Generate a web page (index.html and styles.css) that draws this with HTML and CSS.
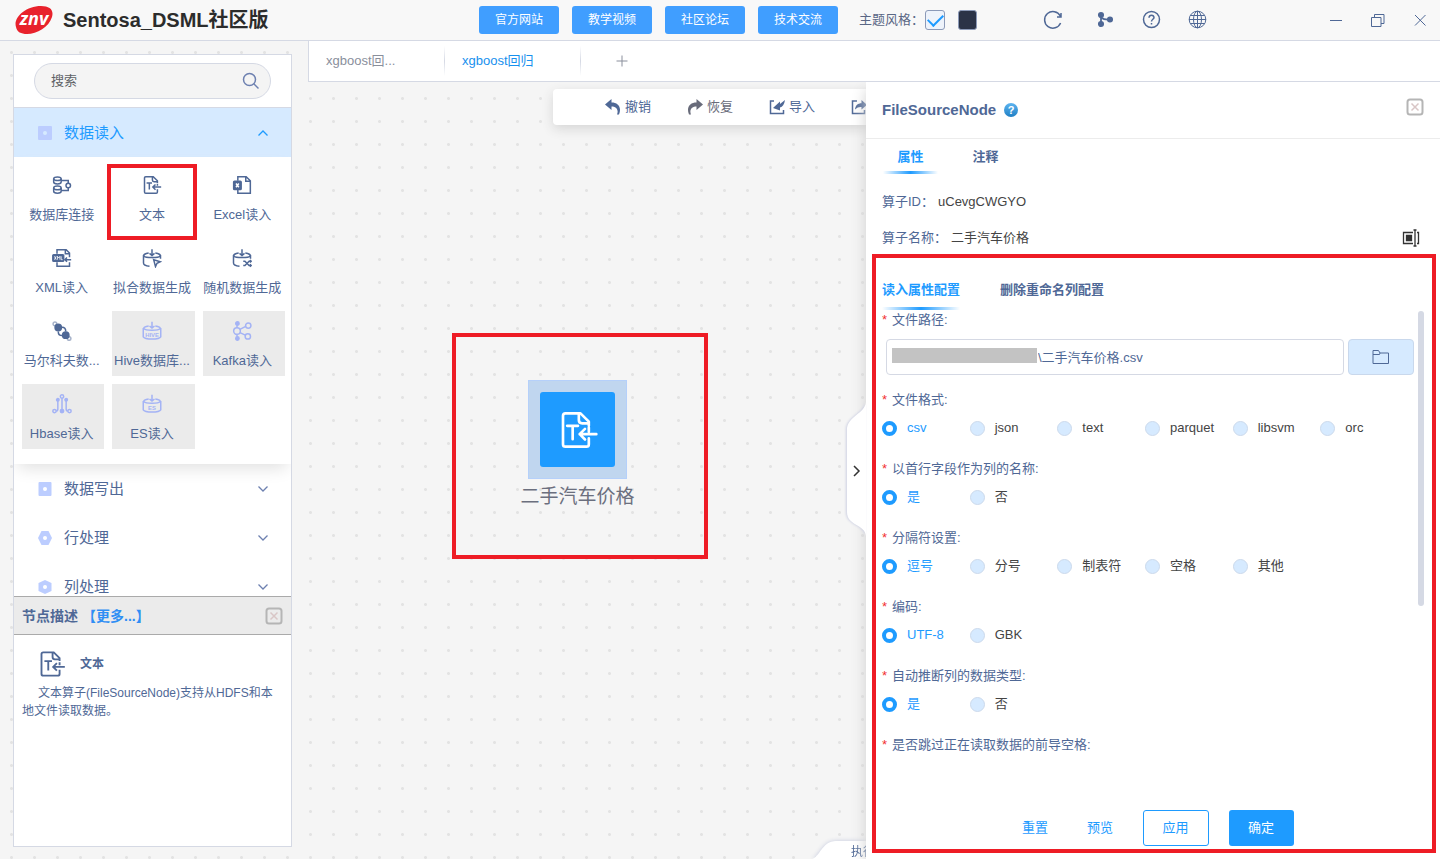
FILE: index.html
```html
<!DOCTYPE html>
<html lang="zh-CN">
<head>
<meta charset="utf-8">
<title>Sentosa_DSML社区版</title>
<link rel="stylesheet" href="styles.css">
</head>
<body>
<svg class="defs" width="0" height="0" aria-hidden="true">
  <symbol id="i-text" viewBox="0 0 24 24"><path d="M18.500 13v-2.500M18.500 9.500V7l-5-5H4.500Q3 2 3 3.500v17Q3 22 4.500 22h12.500q1.500 0 1.500-1.500V17M12.500 2v4q0 2 2 2h4M5.500 9.500h6.500M8.800 9.500v8M23 14.500H13M16.200 11.300L13 14.500l3.200 3.200"/></symbol>
  <symbol id="i-db" viewBox="0 0 24 24"><ellipse cx="6.500" cy="4.500" rx="4.500" ry="2.200"/><path d="M2 4.500v4c0 3 9 3 9 0v-4"/><ellipse cx="6.500" cy="15.500" rx="4.500" ry="2.200"/><path d="M2 15.500v4c0 3 9 3 9 0v-4M11 6.500h8.500V10M11 18.500h8.500V15"/><circle cx="19.500" cy="12.500" r="2.700"/></symbol>
  <symbol id="i-excel" viewBox="0 0 24 24"><path d="M7 7V2h10l5 5v15H7v-4M16.500 2v5.500H22"/><rect x="2" y="7.500" width="9" height="10" rx="1" fill="currentColor"/><path d="M4.800 10.300l3.400 4.400M8.200 10.300l-3.400 4.400" stroke="#fff"/></symbol>
  <symbol id="i-xml" viewBox="0 0 24 24"><path d="M6 7V2h11l4 4v5M16 2v5h5M6 17v5h15v-5M23 14h-7.500M18 11.500L15.500 14l2.500 2.500"/><rect x="1" y="8" width="13" height="8" rx="1" fill="currentColor"/><path d="M3 10l2 4M5 10l-2 4M6.500 14v-4l1.500 2 1.500-2v4M11 10v4h1.800" stroke="#fff" stroke-width="1"/></symbol>
  <symbol id="i-fit" viewBox="0 0 24 24"><path d="M12 1.500V9M9 6.500L12 9l3-2.500M8 6C-1 7.500.5 11.500 12 11.500S25 7.500 16 6M1.800 8.500V18c0 2 3 3.500 7.200 4M22.200 8.500V13M14 14l8 2.500-4 1.800-1.800 4z"/></symbol>
  <symbol id="i-rand" viewBox="0 0 24 24"><path d="M12 1.500V9M9 6.500L12 9l3-2.500M8 6C-1 7.500.5 11.500 12 11.500S25 7.500 16 6M1.800 8.500V18c0 2 3 3.500 7.200 4M22.200 8.500V13M13.500 16h2l5 5h2.500M13.500 21h2l5-5h2.500M21.500 14.500L23 16l-1.500 1.500M21.500 19.500L23 21l-1.500 1.500"/></symbol>
  <symbol id="i-markov" viewBox="0 0 24 24"><circle cx="3.500" cy="3.500" r="2.200" opacity=".5"/><circle cx="20.500" cy="21" r="2.200" opacity=".5"/><circle cx="7.500" cy="7.800" r="3.800" fill="currentColor"/><circle cx="16.500" cy="17" r="3.800" fill="currentColor"/><path d="M12 7.500c3 0 4.500 2 4.500 5M12 17.500c-3 0-4.500-2-4.500-5"/></symbol>
  <symbol id="i-kafka" viewBox="0 0 24 24"><circle cx="6" cy="12" r="4"/><circle cx="6.500" cy="3" r="2" fill="currentColor"/><circle cx="6.500" cy="21" r="2" fill="currentColor"/><circle cx="19.500" cy="5.500" r="3.200"/><circle cx="19" cy="18.500" r="3.200"/><path d="M6 5v3M6 16v3M9.500 10l7-3.500M9.500 14l6.500 3"/></symbol>
  <symbol id="i-hbase" viewBox="0 0 24 24"><circle cx="12" cy="3" r="2"/><circle cx="7" cy="7" r="1.500" fill="currentColor"/><circle cx="17" cy="7" r="1.500" fill="currentColor"/><circle cx="3" cy="20.500" r="2"/><circle cx="12" cy="20.500" r="2" fill="currentColor"/><circle cx="21" cy="20.500" r="2"/><path d="M12 5v15M7 7v11q0 2.500-2 2.500M17 7v11q0 2.500 2 2.500"/></symbol>
  <symbol id="i-drum" viewBox="0 0 24 24"><path d="M12 1v7.500M9 6l3 2.500L15 6M8 6C-1 7.500.5 11 12 11s13-3.500 4-5M1.500 8.500V19c2 3.500 19 3.500 21 0V8.500"/></symbol>
  <symbol id="i-down" viewBox="0 0 12 12"><path d="M1.500 3.500L6 8l4.500-4.500"/></symbol>
  <symbol id="i-close-box" viewBox="0 0 18 18"><rect x="1.500" y="1.500" width="15" height="15" rx="2.500" stroke="#b5b5b5" stroke-width="2"/><path d="M5.500 5.500l7 7M12.500 5.500l-7 7" stroke="#d9c6c6" stroke-width="1.500"/></symbol>
</svg>

<header class="topbar">
  <div class="brand">
    <svg class="logo" viewBox="0 0 38 28" role="img" aria-label="znv"><path d="M1 21C-2 12 10 0 26 0c9 0 13 4 11 11C34 21 22 28 12 28 6 28 2 26 1 21z" fill="#e8222c"/><text x="19" y="19" class="logo-text">znv</text></svg>
    <h1 class="brand-name">Sentosa_DSML社区版</h1>
  </div>
  <nav class="links">
    <button class="link-btn">官方网站</button>
    <button class="link-btn">教学视频</button>
    <button class="link-btn">社区论坛</button>
    <button class="link-btn">技术交流</button>
  </nav>
  <div class="theme">
    <label for="theme-light">主题风格：</label>
    <input class="theme-box" type="checkbox" id="theme-light" checked>
    <button class="theme-dark" aria-label="深色"></button>
  </div>
  <div class="tools">
    <button class="icon-btn" aria-label="刷新"><svg class="ico" viewBox="0 0 20 20"><path d="M17.300 6A8.300 8.300 0 1 0 17.600 13M18 3v4h-4"/></svg></button>
    <button class="icon-btn" aria-label="分支"><svg class="ico" viewBox="0 0 20 20"><g fill="currentColor"><circle cx="6" cy="5" r="2.300"/><circle cx="6" cy="14" r="2.300"/><circle cx="15" cy="9.500" r="2.300"/></g><path d="M6 5v9M6 7.500q3 2.500 9 2" stroke-width="1.800"/></svg></button>
    <button class="icon-btn" aria-label="帮助"><svg class="ico" viewBox="0 0 20 20"><circle cx="10.500" cy="9.500" r="8"/><path d="M8 7.800q.2-2.600 2.500-2.600T13 7.500c0 1.700-2.500 1.900-2.500 4M10.500 13v1.500"/></svg></button>
    <button class="icon-btn" aria-label="语言"><svg class="ico thin" viewBox="0 0 20 20"><circle cx="10.500" cy="9.500" r="8.300"/><ellipse cx="10.500" cy="9.500" rx="4" ry="8.300"/><path d="M10.500 1v17M2 9.500h17M3.500 5.500h14M3.500 13.500h14"/></svg></button>
  </div>
  <div class="win">
    <button class="icon-btn" aria-label="最小化"><svg class="ico thin" viewBox="0 0 20 20"><path d="M4 10.500h12"/></svg></button>
    <button class="icon-btn" aria-label="还原"><svg class="ico thin" viewBox="0 0 20 20"><path d="M3.500 7.500h9.500v9H3.500zM6.500 7.500v-3H16v9h-3"/></svg></button>
    <button class="icon-btn" aria-label="关闭"><svg class="ico thin" viewBox="0 0 20 20"><path d="M5 15.500L15.500 5M5 5l10.500 10.500"/></svg></button>
  </div>
</header>

<div class="page">
  <aside class="sidebar">
    <div class="search">
      <input class="search-input" type="text" placeholder="搜索" aria-label="搜索">
      <svg class="search-icon" viewBox="0 0 18 18"><circle cx="7.500" cy="7.500" r="6"/><path d="M12 12l4.500 4.500"/></svg>
    </div>
    <div class="categories">
      <button class="category open"><svg class="cat-icon" viewBox="0 0 14 14"><rect width="14" height="14" rx="1" fill="#bccdff"/><circle cx="7" cy="7" r="2" fill="#d6eaff"/></svg><span>数据读入</span><svg class="chevron up"><use href="#i-down"/></svg></button>
      <div class="ops">
        <button class="op"><svg class="op-icon"><use href="#i-db"/></svg><span>数据库连接</span></button>
        <button class="op marked"><svg class="op-icon"><use href="#i-text"/></svg><span>文本</span></button>
        <button class="op"><svg class="op-icon"><use href="#i-excel"/></svg><span>Excel读入</span></button>
        <button class="op"><svg class="op-icon"><use href="#i-xml"/></svg><span>XML读入</span></button>
        <button class="op"><svg class="op-icon"><use href="#i-fit"/></svg><span>拟合数据生成</span></button>
        <button class="op"><svg class="op-icon"><use href="#i-rand"/></svg><span>随机数据生成</span></button>
        <button class="op"><svg class="op-icon"><use href="#i-markov"/></svg><span>马尔科夫数...</span></button>
        <button class="op off"><svg class="op-icon" viewBox="0 0 24 24"><use href="#i-drum"/><text x="12" y="19.500" class="glyph-text">HIVE</text></svg><span>Hive数据库...</span></button>
        <button class="op off"><svg class="op-icon"><use href="#i-kafka"/></svg><span>Kafka读入</span></button>
        <button class="op off"><svg class="op-icon"><use href="#i-hbase"/></svg><span>Hbase读入</span></button>
        <button class="op off"><svg class="op-icon" viewBox="0 0 24 24"><use href="#i-drum"/><text x="12" y="19.500" class="glyph-text">ES</text></svg><span>ES读入</span></button>
      </div>
      <button class="category"><svg class="cat-icon" viewBox="0 0 14 14"><rect x=".5" width="13" height="14" rx="1" fill="#bccdff"/><circle cx="7" cy="7" r="2" fill="#fff"/></svg><span>数据写出</span><svg class="chevron"><use href="#i-down"/></svg></button>
      <button class="category"><svg class="cat-icon" viewBox="0 0 14 14"><path d="M3.500 0h7L14 7l-3.500 7h-7L0 7z" fill="#bccdff"/><circle cx="7" cy="7" r="2" fill="#fff"/></svg><span>行处理</span><svg class="chevron"><use href="#i-down"/></svg></button>
      <button class="category"><svg class="cat-icon" viewBox="0 0 14 14"><path d="M7 0l6.500 3v8L7 14 .5 11V3z" fill="#bccdff"/><circle cx="7" cy="7" r="2" fill="#fff"/></svg><span>列处理</span><svg class="chevron"><use href="#i-down"/></svg></button>
    </div>
    <section class="desc">
      <div class="desc-head">
        <h2>节点描述</h2><a href="#more">【更多...】</a>
        <button class="close-btn" aria-label="关闭"><svg class="close-icon"><use href="#i-close-box"/></svg></button>
      </div>
      <div class="desc-body">
        <h3><svg class="desc-icon"><use href="#i-text"/></svg>文本</h3>
        <p>文本算子(FileSourceNode)支持从HDFS和本地文件读取数据。</p>
      </div>
    </section>
  </aside>

  <main class="main">
    <div class="tabs">
      <button class="tab">xgboost回...</button>
      <button class="tab active">xgboost回归</button>
      <button class="tab-add" aria-label="新建"><svg class="plus" viewBox="0 0 12 12"><path d="M6 .5v11M.5 6h11"/></svg></button>
    </div>
    <div class="workspace">
      <div class="canvas">
        <div class="toolbar">
          <button><svg class="bar-icon solid" viewBox="0 0 16 16"><path d="M0 5.500L6.500 0v3.500C13 3.500 17 8 14 15.500h-2c2-5-1-8-5.500-8V11z"/></svg>撤销</button>
          <button class="grey"><svg class="bar-icon solid" viewBox="0 0 16 16"><path d="M16 5.500L9.500 0v3.500C3 3.500-1 8 2 15.500h2c-2-5 1-8 5.500-8V11z"/></svg>恢复</button>
          <button><svg class="bar-icon" viewBox="0 0 16 16"><path d="M5 2H1.500v12.500h13V11"/><path d="M16 1l-5 4V2.500L4 9l7 2.500V8.500c2.500-.6 4.300-3 5-7.500z" fill="currentColor" stroke="none"/></svg>导入</button>
          <button aria-label="导出"><svg class="bar-icon" viewBox="0 0 16 16"><path d="M6 2H1.500v12.500h12V11"/><path d="M4 10.500C4.500 6 7 4.300 10.500 4.200V1L16 6l-5.500 4.500V8C8 7.800 6 8.500 4 10.500z" fill="currentColor" stroke="none"/></svg></button>
        </div>
        <div class="node-frame">
          <div class="node">
            <div class="node-select"><div class="node-box"><svg class="node-icon"><use href="#i-text"/></svg></div></div>
            <span class="node-name">二手汽车价格</span>
          </div>
        </div>
        <div class="run-tab"><svg class="run-shape" viewBox="0 0 60 18"><path d="M0 18C8 16 10 0 24 0h36v18z"/></svg><span>执行</span></div>
      </div>

      <section class="drawer">
        <button class="handle" aria-label="收起"><svg class="handle-svg" viewBox="0 0 20 136"><path class="handle-shape" d="M20 0C19 12 1 14 1 28v82c0 14 18 12 19 24z"/><path class="handle-arrow" d="M8 64l5 5-5 5"/></svg></button>
        <div class="drawer-head">
          <h2>FileSourceNode</h2>
          <svg class="help" viewBox="0 0 14 14"><defs><linearGradient id="hg" x2="0" y2="1"><stop stop-color="#5db4f0"/><stop offset="1" stop-color="#1f7fc4"/></linearGradient></defs><circle cx="7" cy="7" r="7" fill="url(#hg)"/><text x="7" y="11" class="help-text">?</text></svg>
          <button class="close-btn" aria-label="关闭"><svg class="close-icon"><use href="#i-close-box"/></svg></button>
        </div>
        <div class="drawer-tabs"><button class="active">属性</button><button>注释</button></div>
        <dl class="info">
          <div class="info-row"><dt>算子ID：</dt><dd>uCevgCWGYO</dd></div>
          <div class="info-row"><dt>算子名称：</dt><dd>二手汽车价格</dd><button class="rename" aria-label="重命名"><svg class="rename-icon" viewBox="0 0 18 18"><path d="M11 3.500H1.500v11H11M15 3.500h1.500v11H15M13 1v16M11.500 1h3M11.500 17h3"/><path d="M4.500 6.500h5v5h-5z" fill="#333"/></svg></button></div>
        </dl>
        <div class="config">
          <div class="config-tabs"><button class="active">读入属性配置</button><button>删除重命名列配置</button></div>
          <form class="form">
            <div class="field path-field">
              <label class="field-label" for="path">文件路径:</label>
              <div class="path-row">
                <div class="path-box"><input id="path" type="text" value="\二手汽车价格.csv"><span class="mask"></span></div>
                <button type="button" class="browse" aria-label="选择文件"><svg class="folder" viewBox="0 0 18 16"><path d="M1 14.500v-13h5.500L8 4h8.500v10.500zM1 5.500h6.500L8 4"/></svg></button>
              </div>
            </div>
            <fieldset class="field">
              <legend class="field-label">文件格式:</legend>
              <div class="options">
                <label><input type="radio" name="fmt" checked><span>csv</span></label>
                <label><input type="radio" name="fmt"><span>json</span></label>
                <label><input type="radio" name="fmt"><span>text</span></label>
                <label><input type="radio" name="fmt"><span>parquet</span></label>
                <label><input type="radio" name="fmt"><span>libsvm</span></label>
                <label><input type="radio" name="fmt"><span>orc</span></label>
              </div>
            </fieldset>
            <fieldset class="field">
              <legend class="field-label">以首行字段作为列的名称:</legend>
              <div class="options">
                <label><input type="radio" name="hdr" checked><span>是</span></label>
                <label><input type="radio" name="hdr"><span>否</span></label>
              </div>
            </fieldset>
            <fieldset class="field">
              <legend class="field-label">分隔符设置:</legend>
              <div class="options">
                <label><input type="radio" name="sep" checked><span>逗号</span></label>
                <label><input type="radio" name="sep"><span>分号</span></label>
                <label><input type="radio" name="sep"><span>制表符</span></label>
                <label><input type="radio" name="sep"><span>空格</span></label>
                <label><input type="radio" name="sep"><span>其他</span></label>
              </div>
            </fieldset>
            <fieldset class="field">
              <legend class="field-label">编码:</legend>
              <div class="options">
                <label><input type="radio" name="enc" checked><span>UTF-8</span></label>
                <label><input type="radio" name="enc"><span>GBK</span></label>
              </div>
            </fieldset>
            <fieldset class="field">
              <legend class="field-label">自动推断列的数据类型:</legend>
              <div class="options">
                <label><input type="radio" name="infer" checked><span>是</span></label>
                <label><input type="radio" name="infer"><span>否</span></label>
              </div>
            </fieldset>
            <fieldset class="field">
              <legend class="field-label">是否跳过正在读取数据的前导空格:</legend>
            </fieldset>
            <span class="thumb"></span>
          </form>
          <div class="actions">
            <button class="plain">重置</button>
            <button class="plain">预览</button>
            <button class="outline">应用</button>
            <button class="primary">确定</button>
          </div>
        </div>
      </section>
    </div>
  </main>
</div>
</body>
</html>
```
FILE: styles.css
```css
* { box-sizing: border-box; }
:root {
  --ink: #4f6896;
  --blue: #1e9bff;
  --pale: #d6eaff;
  --line: #d5d9e4;
  --mark: #ee1c25;
}
body {
  margin: 0;
  height: 100vh;
  display: flex;
  flex-direction: column;
  overflow: hidden;
  background-color: #f5f5f5;
  font: 13px/20px "Liberation Sans", "Noto Sans CJK SC", sans-serif;
  color: var(--ink);
}
h1, h2, h3, p, dl, dd, fieldset, legend { margin: 0; padding: 0; border: 0; }
button { padding: 0; border: 0; background: none; font: inherit; color: inherit; cursor: pointer; }
svg { display: block; fill: none; stroke: currentColor; }
.defs { position: absolute; }

/* top bar */
.topbar {
  flex: none;
  display: flex;
  align-items: center;
  height: 41px;
  padding: 0 10px 0 15px;
  background: #f8f8f8;
  border-bottom: 1px solid var(--line);
}
.brand { flex: 0 0 464px; display: flex; align-items: center; gap: 10px; }
.logo { width: 38px; height: 28px; stroke: none; }
.logo-text { font: italic bold 18px "Open Sans", sans-serif; fill: #fff; text-anchor: middle; }
.brand-name { font-size: 20px; line-height: 28px; color: #2c2c2c; }
.links { display: flex; gap: 13px; }
.link-btn { width: 80px; height: 28px; border-radius: 3px; background: #409eff; color: #fff; font-size: 12px; }
.theme { display: flex; align-items: center; margin-left: 21px; color: #5a6785; }
.theme-box {
  appearance: none;
  width: 20px;
  height: 20px;
  margin: 0 13px 0 1px;
  border: 1px solid #8c9ab8;
  border-radius: 3px;
  background: #eef3fb;
  display: grid;
  place-items: center;
}
.theme-box:checked::before {
  content: "";
  width: 13px;
  height: 7px;
  margin-bottom: 4px;
  border: solid var(--blue);
  border-width: 0 0 2px 2px;
  transform: rotate(-45deg);
}
.theme-dark { width: 19px; height: 20px; border: 1px solid #8c9ab8; border-radius: 3px; background: #2b3347; }
.tools { display: flex; gap: 26px; margin-left: auto; }
.tools .icon-btn:first-child { margin-right: 6px; }
.win { display: flex; gap: 22px; margin-left: 119px; }
.ico { width: 20px; height: 20px; stroke-width: 1.500; }
.ico.thin { stroke-width: 1; }

/* page */
.page {
  flex: 1;
  min-height: 0;
  display: flex;
  gap: 16px;
  padding-left: 13px;
  background-image: radial-gradient(circle, #e3e3e3 1px, transparent 2px);
  background-size: 23px 23px;
}

/* sidebar */
.sidebar {
  flex: 0 0 279px;
  display: flex;
  flex-direction: column;
  margin: 13px 0 12px;
  background: #fff;
  border: 1px solid var(--line);
}
.search { position: relative; padding: 8px 20px; }
.search-input {
  display: block;
  width: 100%;
  height: 36px;
  padding: 0 40px 2px 16px;
  border: 1px solid var(--line);
  border-radius: 18px;
  background: #f4f4f4;
  font: inherit;
}
.search-input::placeholder { color: #606266; opacity: 1; }
.search-icon { position: absolute; right: 31px; top: 17px; width: 18px; height: 18px; stroke: #6d80b0; stroke-width: 1.500; }
.categories { flex: 1; min-height: 0; overflow: hidden; border-top: 1px solid var(--line); }
.category { display: flex; align-items: center; gap: 12px; width: 100%; height: 49px; padding: 0 22px 0 24px; font-size: 15px; text-align: left; }
.category.open { background: var(--pale); color: var(--blue); }
.cat-icon { width: 14px; height: 14px; stroke: none; }
.chevron { width: 12px; height: 12px; margin-left: auto; stroke: #6d80b0; stroke-width: 1.300; }
.chevron.up { stroke: var(--blue); transform: rotate(180deg); }
.ops {
  display: grid;
  grid-template-columns: repeat(3, minmax(0, 1fr));
  gap: 8px;
  padding: 8px 6px 15px 8px;
  box-shadow: 0 8px 16px -4px #e0e0e0;
}
.op { position: relative; display: flex; flex-direction: column; align-items: center; gap: 10px; height: 65px; padding: 10px 3px 0 0; white-space: nowrap; }
.op.off { background: #ebebeb; }
.op.off .op-icon { color: #a4b3f5; }
.op-icon { width: 20px; height: 20px; stroke-width: 1.800; }
.op.marked::after { content: ""; position: absolute; inset: -1px -2px -10px -5px; border: 4px solid var(--mark); }
.glyph-text { font: bold 7px "Liberation Sans", sans-serif; text-anchor: middle; fill: currentColor; stroke: none; }
.desc { flex: 0 0 250px; border-top: 1px solid #aaa; }
.desc-head { display: flex; align-items: center; height: 38px; padding: 0 8px; background: #ebebeb; border-bottom: 1px solid #aaa; }
.desc-head h2 { font-size: 14px; line-height: 20px; }
.desc-head a { margin-left: 4px; font-size: 14px; font-weight: bold; color: #2f8ef4; text-decoration: none; }
.close-btn { margin-left: auto; }
.close-icon { width: 18px; height: 18px; }
.desc-body { padding: 14px 16px 0 8px; font-size: 12px; line-height: 18px; }
.desc-body h3 { display: flex; align-items: center; gap: 14px; padding-left: 16px; height: 30px; font-size: 12px; }
.desc-icon { width: 28px; height: 28px; stroke-width: 1.600; }
.desc-body p { margin-top: 5px; text-indent: 16px; }

/* tabs */
.main { flex: 1; min-width: 0; display: flex; flex-direction: column; }
.tabs { flex: none; display: flex; height: 41px; background: #fff; border: solid var(--line); border-width: 0 0 1px 1px; }
.tab {
  width: 136px;
  padding: 0 17px;
  text-align: left;
  color: #8a8f9c;
  background: linear-gradient(transparent, var(--line), transparent) right center / 1px 30px no-repeat;
}
.tab.active { color: #1890ee; }
.tab-add { display: grid; place-items: center; width: 82px; color: #8a8f9c; }
.plus { width: 12px; height: 12px; }

/* canvas */
.workspace { flex: 1; min-height: 0; display: flex; }
.canvas { position: relative; flex: 1; min-width: 0; overflow: hidden; }
.toolbar {
  position: absolute;
  left: 245px;
  top: 7px;
  display: flex;
  gap: 36px;
  height: 36px;
  padding: 0 52px;
  background: #fff;
  border-radius: 4px;
  box-shadow: 0 4px 12px #d6d6d6;
}
.toolbar button { display: flex; align-items: center; gap: 4px; white-space: nowrap; }
.toolbar .grey { color: #686b7a; }
.bar-icon { width: 16px; height: 16px; stroke-width: 1.500; }
.bar-icon.solid { fill: currentColor; stroke: none; }
.node-frame {
  position: absolute;
  left: 144px;
  top: 251px;
  width: 256px;
  height: 226px;
  padding-top: 43px;
  border: 4px solid var(--mark);
}
.node { display: flex; flex-direction: column; align-items: center; gap: 4px; padding-right: 5px; }
.node-select { padding: 11px; background: #c0d6ef; border: 1px solid #b5d0fa; }
.node-box { display: grid; place-items: center; width: 75px; height: 75px; border-radius: 3px; background: var(--blue); color: #fff; }
.node-icon { width: 40px; height: 40px; stroke-width: 1.600; stroke-linecap: round; stroke-linejoin: round; }
.node-name { font-size: 19px; line-height: 28px; color: #6b6f7e; }
.run-tab { position: absolute; right: 0; bottom: 0; width: 54px; height: 18px; overflow: hidden; filter: drop-shadow(0 0 2px #c3c8dc); }
.run-shape { width: 60px; height: 18px; fill: #fff; stroke: none; }
.run-tab span { position: absolute; left: 39px; top: 1px; font-size: 12px; white-space: nowrap; }

/* drawer */
.drawer { position: relative; flex: 0 0 574px; display: flex; flex-direction: column; background: #fff; box-shadow: 0 8px 14px #cfcfcf; clip-path: inset(0 0 0 -40px); }
.handle { position: absolute; left: -20px; top: 320px; }
.handle-svg { width: 20px; height: 136px; overflow: visible; }
.handle-shape { fill: #fff; stroke: none; filter: drop-shadow(-1px 0 1px #cdd0e2); }
.handle-arrow { stroke: #333; stroke-width: 1.500; }
.drawer-head { display: flex; align-items: center; gap: 8px; height: 57px; padding: 0 16px; border-bottom: 1px solid #ececec; }
.drawer-head h2 { font-size: 15px; line-height: 20px; }
.drawer-head .close-btn { margin-bottom: 7px; }
.help { width: 14px; height: 14px; stroke: none; }
.help-text { font: bold 11px "Liberation Sans", sans-serif; fill: #fff; text-anchor: middle; }
.drawer-tabs, .config-tabs { display: flex; font-weight: bold; }
.drawer-tabs { padding: 7px 17px 0; gap: 20px; }
.drawer-tabs button { width: 55px; height: 28px; padding-bottom: 7px; }
.drawer-tabs .active, .config-tabs .active {
  color: var(--blue);
  background: linear-gradient(90deg, transparent, var(--blue), transparent) bottom / 100% 3px no-repeat;
}
.info { display: grid; gap: 16px; padding: 18px 20px 6px 16px; }
.info-row { display: flex; align-items: center; height: 20px; }
.info dt { margin-right: 4px; }
.info dd { color: #444; }
.rename { margin-left: auto; }
.rename-icon { width: 18px; height: 18px; stroke: #333; stroke-width: 1.300; }
.config { flex: 1; min-height: 0; display: flex; flex-direction: column; margin: 0 4px 6px 6px; padding: 21px 8px 0 6px; border: 4px solid var(--mark); }
.config-tabs { gap: 40px; }
.config-tabs button { height: 31px; padding-bottom: 10px; }
.form { position: relative; flex: 1; min-height: 0; padding-right: 10px; overflow: hidden; }
.field { margin-bottom: 21px; }
.path-field { margin-bottom: 15px; }
.field-label { display: block; margin-bottom: 8px; line-height: 20px; }
.field-label::before { content: "*"; margin-right: 5px; color: #f23030; }
.path-row { display: flex; gap: 4px; padding-left: 4px; margin-top: 9px; }
.path-box { position: relative; flex: 1; }
.path-box input { width: 100%; height: 36px; padding: 0 12px 2px 151px; border: 1px solid var(--line); border-radius: 4px; font: inherit; color: var(--ink); background: #fff; display: block; }
.mask { position: absolute; left: 6px; top: 9px; width: 145px; height: 15px; background: #c3c3c3; }
.browse { display: grid; place-items: center; width: 66px; height: 36px; border: 1px solid #c9d8ec; border-radius: 4px; background: var(--pale); }
.folder { width: 18px; height: 16px; stroke-width: 1; }
.options { display: grid; grid-template-columns: repeat(6, minmax(0, 1fr)); padding-right: 6px; }
.options label { display: flex; align-items: center; gap: 10px; height: 20px; color: #444; }
.options input { appearance: none; width: 15px; height: 15px; margin: 0; border: 1px solid #ccdaec; border-radius: 50%; background: var(--pale); }
.options input:checked { border: 4px solid var(--blue); background: #fff; }
.options input:checked + span { color: var(--blue); }
.thumb { position: absolute; right: 0; top: 1px; width: 6px; height: 295px; border-radius: 3px; background: #d5d9e4; }
.actions { flex: none; display: flex; justify-content: center; gap: 20px; padding: 0 0 3px; color: var(--blue); }
.actions button { height: 36px; border-radius: 3px; }
.actions .plain { width: 45px; }
.actions .outline { width: 66px; border: 1px solid var(--blue); }
.actions .primary { width: 65px; background: var(--blue); color: #fff; }
```
